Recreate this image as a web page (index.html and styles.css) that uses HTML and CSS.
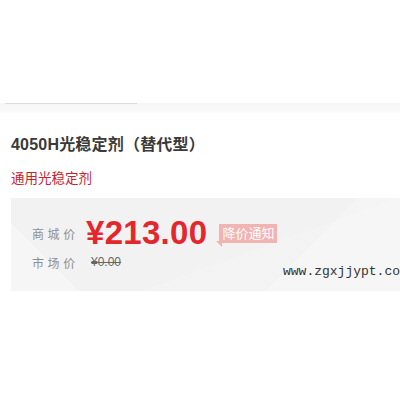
FILE: index.html
```html
<!DOCTYPE html>
<html lang="zh-CN">
<head>
    <meta charset="UTF-8">
    <meta name="viewport" content="width=device-width, initial-scale=1.0">
    <title>4050H光稳定剂（替代型）</title>
    <link rel="stylesheet" href="styles.css">
</head>
<body>
    <div class="tabbar">
        <div class="tab"></div>
    </div>

    <div class="info">
        <h1 class="title">4050H光稳定剂（替代型）</h1>
        <p class="subtitle">通用光稳定剂</p>

        <!-- 价格区 -->
        <div class="price-box">
            <div class="row main">
                <span class="label">商城价</span>
                <span class="price">¥213.00</span>
                <span class="notice">降价通知</span>
            </div>
            <div class="row">
                <span class="label">市场价</span>
                <span class="old">¥0.00</span>
            </div>
            <div class="watermark">www.zgxjjypt.co</div>
        </div>
    </div>
</body>
</html>
```

FILE: styles.css
```css
* {
    box-sizing: border-box;
    margin: 0;
    padding: 0;
}
html, body {
    background: #fff;
    overflow: hidden;
}
body {
    font-family: 'Liberation Sans', 'Noto Sans CJK SC', sans-serif;
    color: #333;
    width: 400px;
    height: 400px;
}
.tabbar {
    margin-top: 103px;
    height: 10px;
    background: linear-gradient(#f6f6f6, #fbfbfb);
}
.tab {
    margin-left: 5px;
    width: 132px;
    border-top: 1px solid #dcdcdc;
}
.info {
    padding-left: 11px;
}
.title {
    margin-top: 22px;
    font-size: 16px;
    line-height: 20px;
    font-weight: bold;
    color: #3a3a3a;
    letter-spacing: 0.2px;
}
.subtitle {
    margin-top: 14px;
    font-size: 13.5px;
    line-height: 20px;
    color: #c4232f;
}
.price-box {
    position: relative;
    margin-top: 9px;
    height: 93px;
    padding: 16px 0 0 21px;
    background:
        linear-gradient(135deg, rgba(255,255,255,0) 72%, rgba(255,255,255,0.2) 72%),
        linear-gradient(45deg, rgba(255,255,255,0.3) 14%, rgba(255,255,255,0) 14%),
        linear-gradient(160deg, rgba(255,255,255,0) 60%, rgba(255,255,255,0.12) 60%),
        #f2f2f2;
    overflow: hidden;
}
.row {
    display: flex;
    align-items: center;
    height: 20px;
}
.row.main {
    height: 38px;
}
.label {
    width: 56px;
    font-size: 12px;
    letter-spacing: 3.6px;
    color: #8f8f8f;
}
.price {
    font-size: 33px;
    font-weight: bold;
    color: #e4262d;
    letter-spacing: 0.3px;
    margin-left: -2px;
}
.notice {
    position: relative;
    margin-left: 12px;
    height: 19px;
    line-height: 19px;
    padding: 0 3px;
    font-size: 13px;
    color: #fff;
    background: #f2b3b3;
}
.notice::after {
    content: '';
    position: absolute;
    left: -3px;
    bottom: -4px;
    border-top: 6px solid #f2b3b3;
    border-left: 6px solid transparent;
}
.old {
    margin-left: 3px;
    font-size: 12px;
    color: #666;
    text-decoration: line-through;
}
.watermark {
    position: absolute;
    left: 272px;
    top: 66px;
    font-family: 'Liberation Mono', monospace;
    font-size: 13px;
    line-height: 16px;
    color: #333;
    white-space: nowrap;
}
```
